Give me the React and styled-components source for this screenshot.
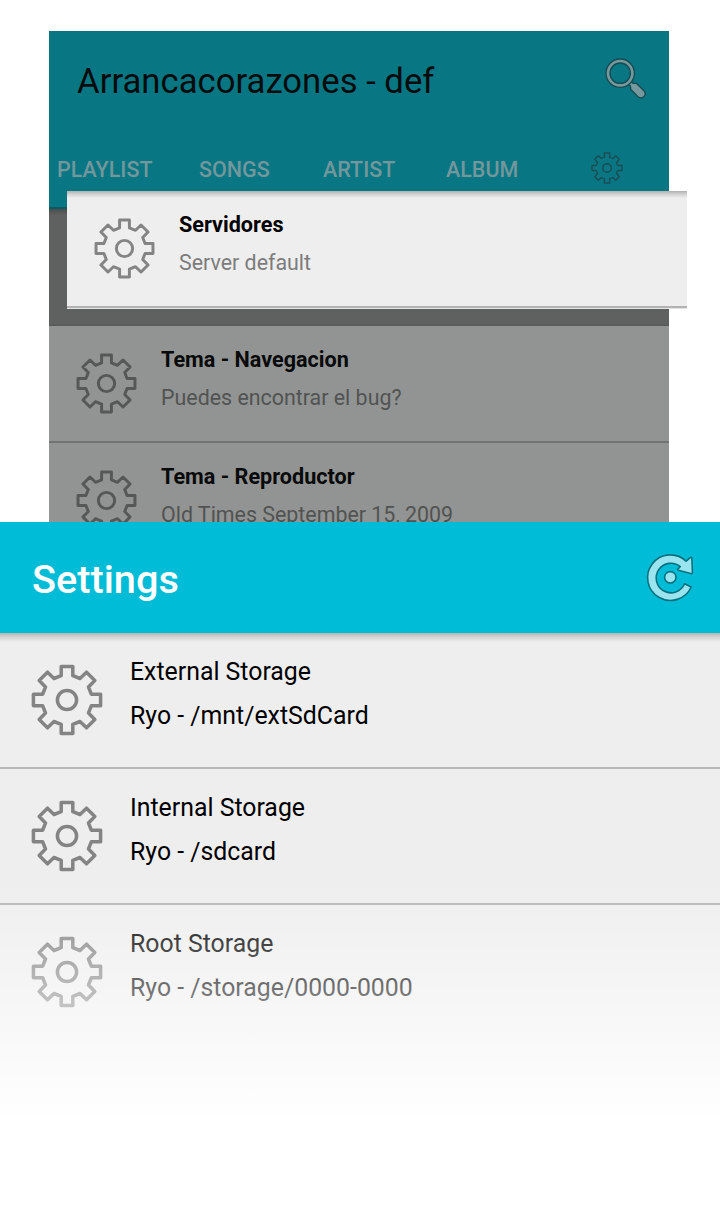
import React from 'react';
import styled, { createGlobalStyle } from 'styled-components';

const GlobalStyle = createGlobalStyle`
  * { box-sizing: border-box; }
  body { margin: 0; background: #fff; font-family: Roboto, sans-serif; }
  svg { display: block; flex: none; overflow: visible; }
`;

const Page = styled.main`
  width: 720px;
  height: 1229px;
  overflow: hidden;
  background: #fff;
`;

const PlayerStage = styled.section`
  position: relative;
  height: 522px;
  padding: 31px 0 0 49px;
  overflow: hidden;
`;

const PlayerScreen = styled.div`
  width: 620px;
  height: 491px;
  overflow: hidden;
  background: #929493;
`;

const PlayerHeader = styled.header`
  height: 178px;
  background: #087683;
  border-bottom: 2px solid #075b65;
  display: flex;
  flex-direction: column;
`;

const TitleBar = styled.div`
  height: 95px;
  padding: 0 23px 0 28px;
  display: flex;
  align-items: center;
  justify-content: space-between;
`;

const TrackTitle = styled.h1`
  margin: 4px 0 0;
  font-size: 34.7px;
  font-weight: 400;
  line-height: 42px;
  color: #080b0b;
  white-space: nowrap;
`;

const TabBar = styled.nav`
  height: 81px;
  padding: 3px 46px 0 8px;
  display: flex;
  align-items: center;
`;

const Tab = styled.span`
  width: ${(p) => p.$width}px;
  margin-top: 3px;
  font-size: 21.5px;
  font-weight: 500;
  line-height: 26px;
  color: #73979c;
  white-space: nowrap;
`;

const SelectedSlot = styled.div`
  height: 117px;
  background: linear-gradient(#4b4d4c 0, #5f6160 6px, #5f6160 115px, #565857 117px);
`;

const OptionRow = styled.div`
  height: 117px;
  padding: 27px 27px 0;
  display: flex;
  gap: 24px;
  border-bottom: 2px solid ${(p) => p.$line || '#727473'};
`;

const OptionText = styled.div`
  margin-top: -8px;
`;

const OptionName = styled.div`
  font-size: 21.6px;
  font-weight: 700;
  line-height: 30px;
  color: ${(p) => p.$color || '#080909'};
  white-space: nowrap;
`;

const OptionDetail = styled.div`
  margin-top: 8px;
  font-size: 21.4px;
  line-height: 30px;
  color: ${(p) => p.$color || '#515352'};
  white-space: nowrap;
`;

const DraggedRow = styled.div`
  position: absolute;
  left: 67px;
  top: 191px;
  width: 620px;
  height: 118px;
  background: linear-gradient(#b0b0b0 0, #d0d0d0 3px, #eee 7px);
  border-bottom: 1px solid #e4e4e4;
`;

const SettingsPanel = styled.section`
  position: relative;
  height: 707px;
  background: #eee;
`;

const SettingsHeader = styled.header`
  height: 111px;
  padding: 0 27px 0 32px;
  display: flex;
  align-items: center;
  justify-content: space-between;
  background: #00bcd6;
`;

const SettingsTitle = styled.h2`
  margin: 4px 0 0;
  font-size: 39.7px;
  font-weight: 500;
  line-height: 48px;
  color: #fff;
`;

const HeaderShadow = styled.div`
  height: 9px;
  margin-bottom: -9px;
  background: linear-gradient(#b4b4b4 0, #d2d2d2 4px, #eee 9px);
`;

const StorageRow = styled.div`
  height: 136px;
  padding: 31px 31px 0;
  display: flex;
  gap: 27px;
  border-bottom: ${(p) => (p.$last ? 0 : 2)}px solid #b5b5b5;
`;

const StorageText = styled.div`
  margin-top: -14px;
`;

const StorageLine = styled.div`
  font-size: 24.85px;
  line-height: 44px;
  color: #000;
  white-space: nowrap;
`;

const BottomFade = styled.div`
  position: absolute;
  inset: 358px 0 0;
  background: linear-gradient(rgba(255, 255, 255, 0) 0, #fff 244px);
`;

const GEAR =
  'M-5.8-33.6H5.8V-24.3L13-21.5L19.5-27.8L27.8-19.5L21.5-13L24.3-5.8H33.6V5.8H24.3L21.5 13L27.8 19.5L19.5 27.8L13 21.5L5.8 24.3V33.6H-5.8V24.3L-13 21.5L-19.5 27.8L-27.8 19.5L-21.5 13L-24.3 5.8H-33.6V-5.8H-24.3L-21.5-13L-27.8-19.5L-19.5-27.8L-13-21.5L-5.8-24.3Z';

function Gear({ size = 72, color = '#848484', stroke = 3.5 }) {
  return (
    <svg width={size} height={size} viewBox="-36 -36 72 72" fill="none" stroke={color} strokeWidth={stroke} strokeLinejoin="round">
      <path d={GEAR} />
      <circle r="9.6" />
    </svg>
  );
}

function SearchIcon() {
  return (
    <svg width="41" height="41" viewBox="0 0 41 41" fill="#75999d" stroke="#174c54" strokeWidth="1.4" strokeLinejoin="round">
      <path d="M22.8 25.4L25.4 22.8L28 25.2L31.6 25.4L39.2 33C40.9 35.3 40.4 37.3 38.8 38.8C37.1 40.4 35 40.3 33 38.7L25.8 31.5L25.4 28Z" />
      <path fillRule="evenodd" d="M15.2 1A14.2 14.2 0 1 1 15.2 29.4A14.2 14.2 0 1 1 15.2 1ZM15.2 5A10.2 10.2 0 1 0 15.2 25.4A10.2 10.2 0 1 0 15.2 5Z" />
    </svg>
  );
}

function ReloadIcon() {
  return (
    <svg width="46" height="49" viewBox="-23.3 -24.3 46 49" fill="#99e4ef" stroke="#08717f" strokeWidth="1.6" strokeLinejoin="round">
      <path d="M15.8-16.2L20-19.6Q21.5-20.6 21.6-18.8L22.1-4.8Q22-3.2 20.5-3.7L8-7Q6.8-7.6 8-8.6L10-10.8A14.8 14.8 0 1 0 14.3 6.5L20.9 9.7A22.8 22.8 0 1 1 15.8-16.2Z" />
      <circle cx="0" cy="0" r="5.7" />
    </svg>
  );
}

function Option({ name, detail, dim = true }) {
  return (
    <OptionRow $line={dim ? undefined : '#b2b2b2'}>
      <Gear size={61} color={dim ? '#565857' : '#848484'} />
      <OptionText>
        <OptionName $color={dim ? undefined : '#000'}>{name}</OptionName>
        <OptionDetail $color={dim ? undefined : '#7c7c7c'}>{detail}</OptionDetail>
      </OptionText>
    </OptionRow>
  );
}

function Storage({ name, path, last }) {
  return (
    <StorageRow $last={last}>
      <Gear />
      <StorageText>
        <StorageLine>{name}</StorageLine>
        <StorageLine>{path}</StorageLine>
      </StorageText>
    </StorageRow>
  );
}

export default function App() {
  return (
    <Page>
      <GlobalStyle />
      <PlayerStage>
        <PlayerScreen>
          <PlayerHeader>
            <TitleBar>
              <TrackTitle>Arrancacorazones - def</TrackTitle>
              <SearchIcon />
            </TitleBar>
            <TabBar>
              <Tab $width={142}>PLAYLIST</Tab>
              <Tab $width={124}>SONGS</Tab>
              <Tab $width={123}>ARTIST</Tab>
              <Tab $width={145}>ALBUM</Tab>
              <Gear size={32} color="#1c4d55" stroke={3.2} />
            </TabBar>
          </PlayerHeader>
          <SelectedSlot />
          <Option name="Tema - Navegacion" detail="Puedes encontrar el bug?" />
          <Option name="Tema - Reproductor" detail="Old Times September 15, 2009" />
        </PlayerScreen>
        <DraggedRow>
          <Option name="Servidores" detail="Server default" dim={false} />
        </DraggedRow>
      </PlayerStage>
      <SettingsPanel>
        <SettingsHeader>
          <SettingsTitle>Settings</SettingsTitle>
          <ReloadIcon />
        </SettingsHeader>
        <HeaderShadow />
        <Storage name="External Storage" path="Ryo - /mnt/extSdCard" />
        <Storage name="Internal Storage" path="Ryo - /sdcard" />
        <Storage name="Root Storage" path="Ryo - /storage/0000-0000" last />
        <BottomFade />
      </SettingsPanel>
    </Page>
  );
}
